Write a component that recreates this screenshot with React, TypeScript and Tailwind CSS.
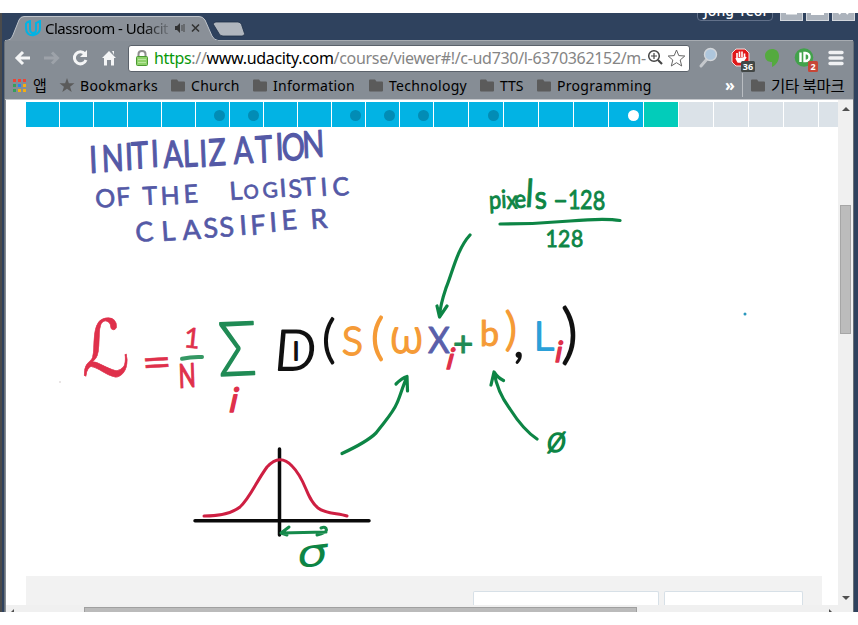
import React from "react";

const segments = Array.from({ length: 24 }, (_, i) => i);
const dotted = [5, 6, 9, 10, 11, 13];

function Folder() {
  return (
    <svg width="14" height="13" viewBox="0 0 14 13" className="shrink-0">
      <path d="M0 1.5Q0 .5 1 .5H6L7.5 2.5H13Q14 2.5 14 3.5V11.5Q14 12.5 13 12.5H1Q0 12.5 0 11.5Z" fill="#5b5b5b" />
    </svg>
  );
}

function Bookmark({ label, className, text }: { label: string; className: string; text: string }) {
  return (
    <div className={"flex shrink-0 items-center gap-[6px] " + className}>
      <Folder />
      <span className={"whitespace-nowrap " + text}>{label}</span>
    </div>
  );
}

function TitleBar() {
  return (
    <div className="flex h-[27px] shrink-0 items-start bg-[#2f425e]">
      <div className="relative ml-[4px] mt-[3px] flex h-6 w-[211px] items-center">
        <svg className="absolute left-0 top-0" width="240" height="25" viewBox="0 0 240 25">
          <path d="M0 24.5C5 24 5.500 22 7 19L13 4Q14.500 .5 18 .5H193Q197 .5 199 4L206 20Q208 24 212 24.500Z" fill="#8a9098" stroke="#bfc4ca" />
          <path d="M0 24.8H212" stroke="#8a9098" strokeWidth="1.500" />
          <path d="M210 6H232Q234.500 6 235.500 8.500L238.500 17.500Q238.500 20 236 20H217Q214 20 213 17.500L207.500 8.500Q207 6 210 6Z" fill="#b0b6be" stroke="#1f3048" strokeWidth=".8" />
        </svg>
        <svg className="relative ml-[19px] mt-[1px] shrink-0" width="17" height="17" viewBox="0 0 17 17" fill="none" stroke="#02b3e4" strokeWidth="2">
          <path d="M1 3L5 1V9C5 13 8 14 10 12M1 3V8C1 13 4 16 9 15C13 14 15 11 15 8V1L11 3V10C11 13 9 14 7 13" />
        </svg>
        <span className="relative ml-[3px] w-[124px] overflow-hidden whitespace-nowrap text-[15px] tracking-[-0.5px] text-black [mask-image:linear-gradient(90deg,#000_78%,transparent_104%)]">Classroom - Udacit</span>
        <svg className="relative ml-[6px] shrink-0" width="28" height="12" viewBox="0 0 28 12">
          <path d="M0 4H2L5 1V11L2 8H0Z" fill="#333" />
          <path d="M7 3V9M9 2V10" stroke="#444" />
          <path d="M17 2.500L24 9.500M24 2.500L17 9.500" stroke="#333" strokeWidth="1.600" />
        </svg>
      </div>
      <div className="ml-auto flex h-2 items-end overflow-hidden">
        <div className="mr-[7px] flex h-[21px] w-[76px] items-center justify-center rounded-[4px] border border-[#62718a] bg-[#293b55] text-[14px] font-medium text-white">Jong-Yeol</div>
        {["—", "□", "×"].map((s) => (
          <div key={s} className="mr-[3px] flex h-[22px] w-[23px] items-center justify-center border border-[#d4d8de] bg-[#acb3bc]">
            <svg width="13" height="13" viewBox="0 0 13 13" fill="none" stroke="#fff" strokeWidth="2">
              {s === "—" && <path d="M1 9.500H12" />}
              {s === "□" && <path d="M1 1H12V10H1Z" />}
              {s === "×" && <path d="M2 0L11 10M11 0L2 10" />}
            </svg>
          </div>
        ))}
      </div>
    </div>
  );
}

function Toolbar() {
  return (
    <div className="flex h-[34px] shrink-0 items-center border-t border-[#a6abb1] pt-[1px]">
      <svg className="ml-[9px] shrink-0" width="103" height="18" viewBox="0 0 103 18" fill="none" strokeWidth="3">
        <path d="M16 9H3M9 3L3 9L9 15" stroke="#f4f5f6" />
        <path d="M30 9H43M38 3.500L43.500 9L38 14.500" stroke="#9da2a9" />
        <path d="M71 5A6 6 0 1 0 72 11" stroke="#f4f5f6" />
        <path d="M73 1V8H66Z" fill="#f4f5f6" />
        <path d="M88 9L95 2L102 9H100V16.500H97V11H93V16.500H90V9ZM98 2H100V6Z" fill="#f4f5f6" />
      </svg>
      <div className="ml-[11px] flex h-[27px] w-[562px] shrink-0 items-center rounded-[3px] border border-[#5b626b] bg-white">
        <svg className="ml-[7px] shrink-0" width="12" height="16" viewBox="0 0 12 16">
          <path d="M2.500 7V4Q2.500 1 6 1T9.500 4V7" fill="none" stroke="#8e8e8e" strokeWidth="2" />
          <rect x=".5" y="6.500" width="11" height="9" rx="1" fill="#8fd26c" stroke="#4b9a32" />
          <path d="M2 9.500H10M2 12.500H10" stroke="#b9e69f" />
        </svg>
        <span className="ml-[6px] w-[493px] shrink-0 whitespace-nowrap pb-px text-[16px] tracking-[-0.32px] text-[#858585]">
          <span className="text-[#099809]">https</span>://<span className="text-black">www.udacity.com</span>/course/viewer#!/c-ud730/l-6370362152/m-
        </span>
        <svg className="shrink-0" width="40" height="20" viewBox="0 0 40 20" fill="none" stroke="#444">
          <circle cx="7" cy="8" r="5.300" strokeWidth="1.500" />
          <path d="M11 12L15 16" strokeWidth="2.200" />
          <path d="M4 8H10M7 5V11" strokeWidth="1.200" />
          <path d="M29.500 2L31.800 7.600L37.800 8L33.200 12L34.700 18L29.500 14.700L24.300 18L25.800 12L21.200 8L27.200 7.600Z" stroke="#666" />
        </svg>
      </div>
      <svg className="ml-[8px] shrink-0" width="150" height="28" viewBox="0 0 150 28">
        <path d="M3 22L9 15" stroke="#c5c8cc" strokeWidth="3" strokeLinecap="round" />
        <circle cx="12.500" cy="10.500" r="6" fill="#aec6dc" stroke="#d3d6da" strokeWidth="1.400" />
        <path d="M38 5H47L51 9V18L47 22H38L34 18V9Z" fill="#e01919" stroke="#f5dcdc" />
        <path d="M39 14V9M41.500 13V7.500M44 13V7.500M46.500 14V9.500M38 14L40 18H44.500L48 13" fill="#fff" stroke="#fff" strokeWidth="1.600" strokeLinejoin="round" />
        <rect x="43" y="17" width="14" height="11" rx="1.500" fill="#424746" />
        <text x="50" y="26" textAnchor="middle" fontSize="9" fontWeight="700" fill="#fff">36</text>
        <path d="M74 5C78 5 81 7.500 81 12C81 17 78 21 74 23V18C70 18 67 16 67 11.500C67 8 70 5 74 5Z" fill="#54aa3f" />
        <circle cx="106" cy="13.500" r="9.300" fill="#42a24b" />
        <path d="M102.500 8.500V18M106.500 9H107.500A4 4 0 0 1 107.500 17H106.500Z" fill="none" stroke="#fff" strokeWidth="2.400" />
        <rect x="110" y="17" width="10" height="11" rx="1.500" fill="#c64637" />
        <text x="115" y="26" textAnchor="middle" fontSize="9" fontWeight="700" fill="#fff">2</text>
        <path d="M132 8.500H144M132 14H144M132 19.500H144" stroke="#f0f1f3" strokeWidth="3.400" strokeLinecap="round" />
      </svg>
    </div>
  );
}

function BookmarksBar() {
  const colors = ["#ee4436", "#ee4436", "#ee4436", "#35a05b", "#2683f0", "#f3ae12", "#35a05b", "#f3ae12", "#f3ae12"];
  return (
    <div className="flex h-[25px] shrink-0 items-center pb-[3px] text-[14px] text-black">
      <div className="ml-[8px] grid w-[13px] shrink-0 grid-cols-3 gap-x-[2px] gap-y-[2px]">
        {colors.map((c, i) => (
          <span key={i} className="h-[3px]" style={{ backgroundColor: c }} />
        ))}
      </div>
      <span className="ml-[7px] w-[14px] shrink-0 whitespace-nowrap font-['Noto_Sans_CJK_KR',sans-serif] text-[15px] leading-5">앱</span>
      <svg className="ml-[12px] shrink-0" width="16" height="14" viewBox="0 0 16 15">
        <path d="M8 0L10 5.500L16 5.700L11.300 9.300L13 15L8 11.600L3 15L4.700 9.300L0 5.700L6 5.500Z" fill="#5b5b5b" />
      </svg>
      <span className="ml-[5px] w-[91px] shrink-0 tracking-[0.4px]">Bookmarks</span>
      <Bookmark label="Church" className="w-[82px]" text="tracking-[0.3px]" />
      <Bookmark label="Information" className="w-[116px]" text="tracking-[0.25px]" />
      <Bookmark label="Technology" className="w-[111px]" text="tracking-[0.3px]" />
      <Bookmark label="TTS" className="w-[57px]" text="tracking-[0px]" />
      <Bookmark label="Programming" className="w-[188px]" text="tracking-[0.3px]" />
      <span className="w-[17px] shrink-0 text-[16px] font-bold leading-5 text-white">»</span>
      <span className="h-6 w-px shrink-0 bg-[#b9bdc2]" />
      <Bookmark label="기타 북마크" className="ml-[8px]" text="font-['Noto_Sans_CJK_KR',sans-serif] text-[15.5px] leading-5 tracking-[-0.2px]" />
    </div>
  );
}

function Progress() {
  return (
    <div className="ml-[20px] mt-[2px] flex h-[25px] w-[812px] shrink-0 overflow-hidden">
      {segments.map((i) => (
        <div
          key={i}
          className={
            "mr-px flex shrink-0 items-center pt-[2px] " +
            (i < 12 ? "w-[33px] pl-[18px] " : "w-[34px] pl-[19px] ") +
            (i < 18 ? "bg-[#02b3e4]" : i === 18 ? "bg-[#02ccba]" : "bg-[#dbe2e8]")
          }
        >
          {dotted.includes(i) && <span className="size-[11px] shrink-0 rounded-full bg-[#028cb5]" />}
          {i === 17 && <span className="size-[11px] shrink-0 rounded-full bg-white" />}
        </div>
      ))}
    </div>
  );
}

function Whiteboard() {
  return (
    <svg className="shrink-0" width="832" height="449" viewBox="6 127 832 449" fontFamily="Lato, 'Open Sans', sans-serif" strokeLinejoin="round">
      <g fill="#5459a6" stroke="#5459a6" strokeWidth=".7">
        <text fontSize="37" strokeWidth="1.200" transform="scale(.78 1)" x="115 131 161 169 194 210 235 256 268 300 328 354 362 388" y="173 172 170 169 167 168 167 167 166 164 163 160 161 158" rotate="-3">INITIALIZATION</text>
        <text fontSize="25" x="96 117" y="208 206" rotate="-5">OF</text>
        <text fontSize="25" x="143 161 184" y="205 205 203" rotate="-3">THE</text>
        <text fontSize="25" x="230 244 263 280 289 302 321 333" y="200 199 198 197 198 196 196 196" rotate="-4">L<tspan fontSize="19">O</tspan><tspan fontSize="21">G</tspan>ISTIC</text>
        <text fontSize="27" x="136 162 183 204 220 240 251 270 282 311" y="242 241 240 238 237 235 235 232 230 229" rotate="-4">CLASSIFIER</text>
      </g>
      <g fill="#0d8545" stroke="#0d8545" strokeWidth=".9">
        <text fontSize="25" transform="scale(.88 1)" x="556 570 576 585 598 608" y="209 208 209 208 207 209" rotate="-3">pixe<tspan fontSize="38" fontStyle="italic">l</tspan><tspan fontSize="32">s</tspan></text>
        <text fontSize="26" x="553" y="209">–</text>
        <text fontSize="27" transform="scale(.8 1)" x="710 725 741" y="209 209 210">128</text>
        <text fontSize="24" transform="scale(.88 1)" x="620 634 649" y="247">128</text>
      </g>
      <g fill="none" stroke="#0d8545" strokeWidth="3.200" strokeLinecap="round">
        <path d="M500 224Q535 224 570 221T620 220.500" />
        <path d="M470 235C457 249 452 274 446 288C442 300 440 308 439.500 316M437 306L439.500 317L447 306" />
        <path d="M342 453.500C356 447 370 439 376 433C385 421 393 413 397 403C400 397 403 385 407 377M396 384Q402 378 407 376.500L407.500 391" />
        <path d="M537 439C528 433 517 420 510 409C501 397 496 384 494 372M491 385L494 372Q498 378 503.500 380.500" />
      </g>
      <g fill="#df304b" stroke="#df304b" strokeWidth=".6">
        <text fontFamily="DejaVu Sans, sans-serif" fontSize="70" transform="translate(82 376) scale(.95 1.120)">ℒ</text>
        <text fontSize="45" transform="translate(143 377) scale(1.150 .9) rotate(-4)">=</text>
        <text fontSize="28" x="183" y="347" rotate="6">1</text>
        <text fontSize="33" transform="translate(179 388) scale(.68 1) rotate(-3)" strokeWidth="1.300">N</text>
        <text fontSize="34" fontStyle="italic" transform="translate(229 412) skewX(-6)" strokeWidth="1.500">i</text>
        <text fontSize="29" fontStyle="italic" transform="translate(446 369) skewX(-8)" strokeWidth="1.500">i</text>
        <text fontSize="29" fontStyle="italic" transform="translate(555 362) skewX(-4)" strokeWidth="1.500">i</text>
      </g>
      <path d="M182 358.700Q192 356.500 202 357" stroke="#359864" strokeWidth="4" strokeLinecap="round" fill="none" />
      <g fill="#208b55" stroke="#208b55">
        <text fontFamily="Lato, sans-serif" fontSize="75" fontWeight="300" transform="translate(219 376) scale(.85 1) rotate(-2)" strokeWidth="1.600">Σ</text>
        <text fontSize="35" x="453" y="356" strokeWidth="1">+</text>
      </g>
      <g fill="#111" stroke="#111" strokeWidth="1.800">
        <text fontSize="56" fontWeight="300" transform="translate(273 370) scale(.98 1) skewX(-5)">D</text>
        <text fontSize="36" fontWeight="300" transform="translate(292 360)">ı</text>
        <text fontSize="52" fontWeight="300" x="322" y="357">(</text>
        <text fontSize="50" fontWeight="300" fontStyle="italic" x="515" y="357">,</text>
        <text fontSize="66" fontWeight="300" x="561" y="356">)</text>
      </g>
      <g fill="#f59b37" stroke="#f59b37">
        <text fontSize="39" fontWeight="300" x="342" y="355" strokeWidth="2">S</text>
        <text fontSize="50" fontWeight="300" x="371" y="354" strokeWidth="2">(</text>
        <text fontSize="46" fontFamily="Open Sans, sans-serif" fontWeight="300" transform="translate(390 353) scale(.98 1)" strokeWidth="1.800">ω</text>
        <text fontSize="34" x="480" y="346" strokeWidth="1">b</text>
        <text fontSize="46" fontWeight="300" x="505" y="345" strokeWidth="2">)</text>
      </g>
      <text fontSize="36" transform="translate(428 353) scale(.93 1)" fill="#5a5faa" stroke="#5a5faa" strokeWidth="1">X</text>
      <text fontSize="39" fontWeight="300" x="534" y="350" fill="#2ba0d8" stroke="#2ba0d8" strokeWidth="2.200">L</text>
      <text fontSize="38" fontWeight="300" fontStyle="italic" x="547" y="452" fill="#0d8545" stroke="#0d8545" strokeWidth="1.600">ø</text>
      <g fill="none" strokeLinecap="round">
        <path d="M195 520.800H369M279.500 449V535" stroke="#0a0a0a" strokeWidth="3.500" />
        <path d="M204 516C217 516 231 514 240 507C250 498 256 482 267 467Q280 453 292 466C307 481 305 497 318 508C326 514 338 513 347 516" stroke="#ce1f42" strokeWidth="3" />
        <path d="M281 533L326 532M289 527L281 533L287 535M321 528Q326 526 326.500 530Q326 533 317 535" stroke="#158a4b" strokeWidth="3" />
      </g>
      <text fontSize="40" fontFamily="DejaVu Sans, sans-serif" transform="translate(296 568) scale(1.250 .95) rotate(-8) skewX(-12)" fill="#0d8545">σ</text>
      <circle cx="745" cy="314" r="1.500" fill="#2a97bd" />
      <circle cx="60" cy="382" r="1" fill="#e2dddd" />
    </svg>
  );
}

function Page() {
  return (
    <div className="flex h-[512px] flex-col bg-white">
      <div className="flex h-[505px]">
        <div className="flex w-[832px] flex-col">
          <Progress />
          <Whiteboard />
          <div className="ml-[20px] flex h-[29px] w-[796px] items-end gap-[5px] bg-[#f2f2f2] pl-[447px]">
            <div className="h-[14px] w-[186px] rounded-t-[2px] border border-b-0 border-[#d7e0e7] bg-white" />
            <div className="h-[14px] w-[139px] rounded-t-[2px] border border-b-0 border-[#d7e0e7] bg-white" />
          </div>
        </div>
        <div className="flex w-[15px] flex-col items-center bg-[#f0f0f0] pt-[7px]">
          <span className="border-x-4 border-b-4 border-x-transparent border-b-[#505050]" />
          <span className="mt-[94px] h-[129px] w-[11px] border border-[#a6a6a6] bg-[#bcbcbc]" />
          <span className="mt-[262px] border-x-4 border-t-4 border-x-transparent border-t-[#505050]" />
        </div>
      </div>
      <div className="flex h-[7px] items-end overflow-hidden bg-[#f0f0f0]">
        <span className="ml-[5px] h-[3px] w-[3px] bg-[#505050] [clip-path:polygon(100%_0,100%_100%,0_100%)]" />
        <span className="ml-[70px] h-[5px] w-[553px] border border-b-0 border-[#a0a0a0] bg-[#bbb]" />
        <span className="ml-[192px] h-[3px] w-[3px] bg-[#505050] [clip-path:polygon(0_0,100%_100%,0_100%)]" />
      </div>
    </div>
  );
}

export default function App() {
  return (
    <div className="h-[625px] w-[858px] overflow-hidden bg-white py-[13px] font-['Noto_Sans','Noto_Sans_CJK_KR',sans-serif]">
      <div className="flex h-[599px] flex-col overflow-hidden border-l-2 border-[#4b4b4b] bg-[#2f425e]">
        <TitleBar />
        <div className="ml-[2px] mr-[4px] flex h-[572px] shrink-0 flex-col rounded-t-[3px] border-x border-x-[#687078] bg-[#868d95]">
          <Toolbar />
          <BookmarksBar />
          <div className="h-px shrink-0 bg-[#c5c8cc]" />
          <div className="ml-px">
            <Page />
          </div>
        </div>
      </div>
    </div>
  );
}
